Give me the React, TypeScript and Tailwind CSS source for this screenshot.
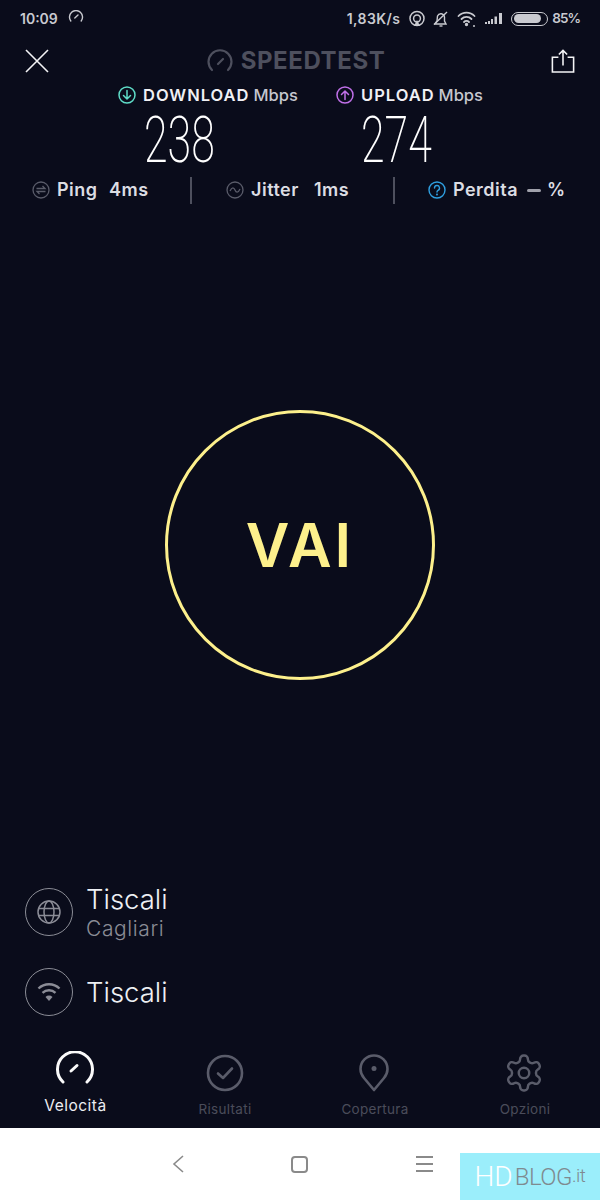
import React from "react";

const font = "font-['Inter','Noto_Sans',sans-serif]";
const statText = "text-[18px] font-semibold leading-[24px] tracking-[0.5px] text-[#dcdde3]";

function Tab({ icon, label, active }: { icon: React.ReactNode; label: string; active?: boolean }) {
  return (
    <div className="flex w-[150px] flex-col items-center">
      <div className={`flex h-[47px] items-start justify-center ${active ? "pt-[3px]" : "pt-[6px]"}`}>{icon}</div>
      <span className={`${active ? "mt-[1px] ml-[1px] text-[15.5px] text-[#eceef2] tracking-[0.5px]" : "mt-[4px] text-[13.5px] text-[#4a4c5a] tracking-[0.3px]"} leading-[20px]`}>{label}</span>
    </div>
  );
}

export default function App() {
  return (
    <div className={`${font} flex h-[1200px] w-[600px] flex-col overflow-hidden bg-[#0a0c1b]`}>
      {/* status bar */}
      <div className="flex h-[37px] shrink-0 items-center pl-[20px] pr-[20px] text-[14px] font-semibold text-[#c9cad0]">
        <span>10:09</span>
        <svg width="16" height="14" viewBox="0 0 16 14" fill="none" stroke="#c9cad0" strokeWidth="1.4" strokeLinecap="round" className="ml-[10px] mb-[3px]">
          <path d="M2.8 11 A6.5 6.5 0 1 1 13.2 11" />
          <path d="M6.8 8 L10 5" />
        </svg>
        <span className="ml-auto text-[14px] tracking-[0.4px]">1,83K/s</span>
        <svg width="18" height="18" viewBox="0 0 18 18" fill="none" stroke="#c9cad0" strokeWidth="1.5" className="ml-[8px]">
          <circle cx="9" cy="8.5" r="7" />
          <circle cx="9" cy="8.5" r="3.4" />
          <path d="M6 16 L9 10 L12 16" fill="#c9cad0" stroke="none" />
        </svg>
        <svg width="18" height="18" viewBox="0 0 18 18" fill="none" stroke="#c9cad0" strokeWidth="1.4" className="ml-[6px]">
          <path d="M3 14 L14 14 L12.5 11 L12.5 7 A3.7 4 0 0 0 5.5 6 L5 11 Z" />
          <path d="M7.5 16 L10.5 16" />
          <path d="M2 14.5 L15 2" />
        </svg>
        <svg width="20" height="18" viewBox="0 0 20 18" fill="none" stroke="#c9cad0" strokeWidth="1.8" strokeLinecap="round" className="ml-[7px]">
          <path d="M1.5 6 A11 11 0 0 1 17.5 6" />
          <path d="M4.5 9 A7 7 0 0 1 14.5 9" />
          <path d="M7 12 A3.5 3.5 0 0 1 12 12" />
          <circle cx="9.5" cy="14.5" r="0.8" fill="#c9cad0" />
          <circle cx="17" cy="16" r="1" fill="#c9cad0" stroke="none" />
        </svg>
        <svg width="19" height="13" viewBox="0 0 19 13" fill="#c9cad0" className="ml-[8px]">
          <rect x="0" y="10" width="2" height="2" />
          <rect x="3" y="9" width="2" height="3" />
          <rect x="6" y="7" width="2" height="5" />
          <rect x="9.5" y="4.5" width="2.5" height="7.5" />
          <rect x="14" y="1" width="3" height="11" />
        </svg>
        <div className="ml-[7px] flex h-[14px] w-[37px] shrink-0 items-center rounded-full border border-[#c9cad0] p-[1.5px]">
          <div className="h-full w-[85%] rounded-full bg-[#c9cad0]" />
        </div>
        <span className="ml-[4px] text-[13.5px] tracking-[-1px]">85%</span>
      </div>

      {/* header */}
      <div className="flex h-[46px] shrink-0 items-center justify-between pl-[25px] pr-[25px] pt-[2px]">
        <svg width="24" height="24" viewBox="0 0 24 24" fill="none" stroke="#f4f4f6" strokeWidth="1.6">
          <path d="M1 1 L23 23 M23 1 L1 23" />
        </svg>
        <div className="mr-[8px] flex items-center">
          <svg width="26" height="24" viewBox="0 0 26 24" fill="none" stroke="#4e505e" strokeWidth="2.2" strokeLinecap="round">
            <path d="M5 21 A11.5 11.5 0 1 1 21 21" />
            <path d="M11 15 L16 10" />
          </svg>
          <span className="ml-[8px] text-[24px] font-bold tracking-[0.6px] text-[#4e505e]">SPEEDTEST</span>
        </div>
        <svg width="24" height="24" viewBox="0 0 26 26" fill="none" stroke="#f4f4f6" strokeWidth="1.7">
          <path d="M8 9 H1.5 V25 H24.5 V9 H18" />
          <path d="M13 18 V1.5 M8.5 6 L13 1.5 L17.5 6" />
        </svg>
      </div>

      {/* speeds */}
      <div className="flex shrink-0 pl-[118px]">
        <div className="flex w-[218px] flex-col items-start">
          <div className="flex h-[24px] items-center whitespace-nowrap">
            <svg width="18" height="18" viewBox="0 0 18 18" fill="none" stroke="#5fdcc8" strokeWidth="1.5" strokeLinecap="round" strokeLinejoin="round">
              <circle cx="9" cy="9" r="8" />
              <path d="M9 4.5 V13 M5.5 9.5 L9 13 L12.5 9.5" />
            </svg>
            <span className="ml-[7px] text-[16.5px] font-semibold tracking-[1px] text-[#f0f0f4]">DOWNLOAD</span>
            <span className="ml-[4px] text-[16.5px] font-medium text-[#c6c7cf]">Mbps</span>
          </div>
          <div className="ml-[26px] h-[67px] origin-left scale-x-[0.66] font-['Roboto',sans-serif] text-[65px] font-extralight leading-[67px] text-white">238</div>
        </div>
        <div className="flex w-[182px] flex-col items-start">
          <div className="flex h-[24px] items-center whitespace-nowrap">
            <svg width="18" height="18" viewBox="0 0 18 18" fill="none" stroke="#c070e8" strokeWidth="1.5" strokeLinecap="round" strokeLinejoin="round">
              <circle cx="9" cy="9" r="8" />
              <path d="M9 13.5 V5 M5.5 8.5 L9 5 L12.5 8.5" />
            </svg>
            <span className="ml-[7px] text-[16.5px] font-semibold tracking-[1px] text-[#f0f0f4]">UPLOAD</span>
            <span className="ml-[4px] text-[16.5px] font-medium text-[#c6c7cf]">Mbps</span>
          </div>
          <div className="ml-[25px] h-[67px] origin-left scale-x-[0.66] font-['Roboto',sans-serif] text-[65px] font-extralight leading-[67px] text-white">274</div>
        </div>
      </div>

      {/* stats */}
      <div className="mt-[2px] flex h-[28px] shrink-0 items-center pl-[32px]">
        <svg width="18" height="18" viewBox="0 0 18 18" fill="none" stroke="#5a5c6a" strokeWidth="1.3">
          <circle cx="9" cy="9" r="8" />
          <path d="M4.5 7.5 H13 L10.5 5 M13.5 10.5 H5 L7.5 13" />
        </svg>
        <span className={`ml-[7px] w-[40px] ${statText}`}>Ping</span>
        <span className={`ml-[12px] w-[38px] ${statText}`}>4ms</span>
        <div className="ml-[43px] h-[27px] w-[2px] bg-[#4e505e]" />
        <svg width="18" height="18" viewBox="0 0 18 18" fill="none" stroke="#5a5c6a" strokeWidth="1.3" className="ml-[34px]">
          <circle cx="9" cy="9" r="8" />
          <path d="M4 10 C6 5.5 8 6.5 9 9 C10 11.5 12 12.5 14 8" />
        </svg>
        <span className={`ml-[7px] w-[49px] ${statText}`}>Jitter</span>
        <span className={`ml-[14px] w-[33px] ${statText}`}>1ms</span>
        <div className="ml-[46px] h-[27px] w-[2px] bg-[#4e505e]" />
        <svg width="18" height="18" viewBox="0 0 18 18" fill="none" stroke="#2f9fe0" strokeWidth="1.4" strokeLinecap="round" className="ml-[33px]">
          <circle cx="9" cy="9" r="8" />
          <path d="M6.5 7 A2.5 2.5 0 1 1 10 9.3 C9.2 9.8 9 10.2 9 11" />
          <circle cx="9" cy="13.5" r="0.4" />
        </svg>
        <span className={`ml-[7px] w-[67px] ${statText}`}>Perdita</span>
        <div className="ml-[7px] h-[3px] w-[14px] rounded-full bg-[#a0a1ab]" />
        <span className={`ml-[6px] ${statText}`}>%</span>
      </div>

      {/* go button */}
      <div className="flex flex-1 flex-col items-center pt-[206px]">
        <div className="flex h-[270px] w-[270px] items-center justify-center rounded-full border-[3px] border-[#fdf08c]">
          <span className="text-[60px] font-semibold tracking-[3px] text-[#fdf08c]">VAI</span>
        </div>
      </div>

      {/* server info */}
      <div className="flex shrink-0 flex-col gap-[32px] pl-[25px]">
        <div className="flex h-[48px] items-start">
          <div className="flex h-[48px] w-[48px] items-center justify-center rounded-full border border-[#8b8c96]">
            <svg width="24" height="24" viewBox="0 0 24 24" fill="none" stroke="#8b8c96" strokeWidth="1.5">
              <circle cx="12" cy="12" r="11" />
              <ellipse cx="12" cy="12" rx="5" ry="11" />
              <path d="M1.5 8.5 H22.5 M1.5 15.5 H22.5" />
            </svg>
          </div>
          <div className="ml-[13px] mt-[-4px] flex flex-col">
            <span className="text-[27.5px] font-light leading-[30px] text-[#eef0f4]">Tiscali</span>
            <span className="mt-[3px] text-[21px] font-light leading-[24px] tracking-[0.6px] text-[#8b8c96]">Cagliari</span>
          </div>
        </div>
        <div className="flex items-center">
          <div className="flex h-[48px] w-[48px] items-center justify-center rounded-full border border-[#8b8c96]">
            <svg width="24" height="20" viewBox="0 0 24 20" fill="none" stroke="#8b8c96" strokeWidth="2.4">
              <path d="M1.5 6.5 A15 15 0 0 1 22.5 6.5" />
              <path d="M5.5 10.8 A9.5 9.5 0 0 1 18.5 10.8" />
              <path d="M12 19 L8.5 15 A5 5 0 0 1 15.5 15 Z" fill="#8b8c96" stroke="none" />
            </svg>
          </div>
          <span className="ml-[13px] text-[27.5px] font-light leading-[30px] text-[#eef0f4]">Tiscali</span>
        </div>
      </div>

      {/* tabs */}
      <div className="mt-[32px] flex h-[80px] shrink-0">
        <Tab
          active
          label="Velocità"
          icon={
            <svg width="38" height="33" viewBox="0 0 38 33" fill="none" stroke="#fafafa" strokeWidth="3" strokeLinecap="round">
              <path d="M7 31 A17.5 17.5 0 1 1 31 31" />
              <path d="M15 20 L21 14.5" />
            </svg>
          }
        />
        <Tab
          label="Risultati"
          icon={
            <svg width="38" height="38" viewBox="0 0 38 38" fill="none" stroke="#5a5c6a" strokeWidth="2.6" strokeLinecap="round" strokeLinejoin="round">
              <circle cx="19" cy="19" r="17" />
              <path d="M12 19.5 L17 24 L26 14.5" />
            </svg>
          }
        />
        <Tab
          label="Copertura"
          icon={
            <svg width="30" height="38" viewBox="0 0 30 38" fill="none" stroke="#5a5c6a" strokeWidth="2.6" strokeLinejoin="round" className="mr-[2px]">
              <path d="M15 36 L5 24 C2.5 21 1.5 18.5 1.5 15 A13.5 13.5 0 0 1 28.5 15 C28.5 18.5 27.5 21 25 24 Z" />
              <circle cx="15" cy="14.5" r="2.5" fill="#5a5c6a" stroke="none" />
            </svg>
          }
        />
        <Tab
          label="Opzioni"
          icon={
            <svg width="42" height="42" viewBox="0 0 24 24" fill="none" stroke="#5a5c6a" strokeWidth="1.4" strokeLinejoin="round" className="mr-[2px] mt-[-2px]">
              <path d="M12.22 2h-.44a2 2 0 0 0-2 2v.18a2 2 0 0 1-1 1.73l-.43.25a2 2 0 0 1-2 0l-.15-.08a2 2 0 0 0-2.73.73l-.22.38a2 2 0 0 0 .73 2.73l.15.1a2 2 0 0 1 1 1.72v.51a2 2 0 0 1-1 1.74l-.15.09a2 2 0 0 0-.73 2.73l.22.38a2 2 0 0 0 2.73.73l.15-.08a2 2 0 0 1 2 0l.43.25a2 2 0 0 1 1 1.73V20a2 2 0 0 0 2 2h.44a2 2 0 0 0 2-2v-.18a2 2 0 0 1 1-1.73l.43-.25a2 2 0 0 1 2 0l.15.08a2 2 0 0 0 2.73-.73l.22-.39a2 2 0 0 0-.73-2.73l-.15-.08a2 2 0 0 1-1-1.74v-.5a2 2 0 0 1 1-1.74l.15-.09a2 2 0 0 0 .73-2.73l-.22-.38a2 2 0 0 0-2.73-.73l-.15.08a2 2 0 0 1-2 0l-.43-.25a2 2 0 0 1-1-1.73V4a2 2 0 0 0-2-2z" />
              <circle cx="12" cy="12" r="3" />
            </svg>
          }
        />
      </div>

      {/* nav bar */}
      <div className="relative flex h-[72px] shrink-0 bg-white">
        <div className="flex w-[500px] items-start pt-[27px] pl-[171px]">
          <svg width="14" height="18" viewBox="0 0 14 18" fill="none" stroke="#8a8a8a" strokeWidth="1.6">
            <path d="M12 1 L3 9 L12 17" />
          </svg>
          <div className="ml-[106px] mt-[1px] h-[17px] w-[17px] rounded-[4px] border-2 border-[#8a8a8a]" />
          <div className="ml-[108px] mt-[1px] flex w-[17px] flex-col gap-[5px]">
            <div className="h-[2px] bg-[#8a8a8a]" />
            <div className="h-[2px] bg-[#8a8a8a]" />
            <div className="h-[2px] bg-[#8a8a8a]" />
          </div>
        </div>
        <div className="absolute bottom-0 right-0 flex h-[47px] w-[140px] items-center justify-center bg-[#9beefb] font-['Roboto',sans-serif]">
          <span className="text-[28px] font-light text-white">HD</span>
          <span className="ml-[2px] text-[24px] font-light tracking-[-0.5px] text-[#7f8a90]">BLOG</span>
          <span className="text-[19px] font-light tracking-[-0.5px] text-[#7f8a90]">.it</span>
        </div>
      </div>
    </div>
  );
}
